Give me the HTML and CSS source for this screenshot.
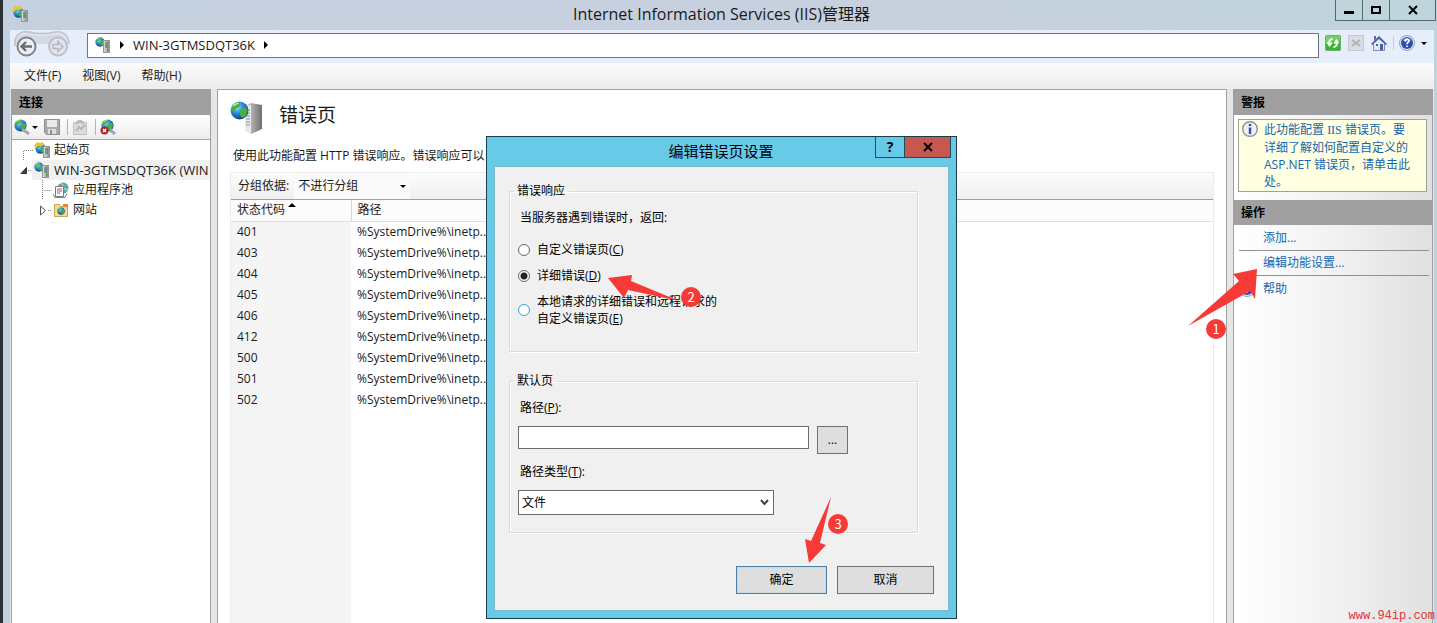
FILE: index.html
```html
<!DOCTYPE html>
<html lang="zh-CN">
<head>
    <meta charset="UTF-8">
    <meta name="viewport" content="width=device-width, initial-scale=1.0">
    <title>Internet Information Services (IIS)管理器</title>
    <link rel="stylesheet" href="styles.css">
</head>
<body>
    <!-- shared icons -->
    <svg class="icon-defs" width="0" height="0">
        <defs>
            <radialGradient id="sea" cx="35%" cy="30%" r="75%">
                <stop offset="0" stop-color="#9fe0ff" />
                <stop offset="0.5" stop-color="#2a86d6" />
                <stop offset="1" stop-color="#0b3c8c" />
            </radialGradient>
            <linearGradient id="metal">
                <stop offset="0" stop-color="#e2e6e2" />
                <stop offset="1" stop-color="#7f8a88" />
            </linearGradient>
            <linearGradient id="tower">
                <stop offset="0" stop-color="#d8d8d8" />
                <stop offset="1" stop-color="#6f6f6f" />
            </linearGradient>
            <symbol id="globe" viewBox="0 0 16 16">
                <circle cx="8" cy="8" r="7.5" fill="url(#sea)" />
                <path d="M3 3c2-2 5-2 6-1l-1 3-3 1-1 3-3-2zM9 7l4-2 2 3-2 5-3 1-2-3z" fill="#49b13c" />
                <path d="M3 4c1-1 2-2 4-2" stroke="#d8ffd0" fill="none" />
            </symbol>
            <symbol id="server" viewBox="0 0 16 16">
                <use href="#globe" width="10" height="10" />
                <rect x="8.5" y="3.500" width="6" height="12" fill="url(#metal)" stroke="#8f9a96" />
                <path d="M10 6h3M10 8h3M10 10h3" stroke="#53605c" />
                <rect x="12" y="12" width="1" height="2" fill="#2fa33a" />
            </symbol>
            <symbol id="start" viewBox="0 0 16 16">
                <use href="#globe" x="1" y="1" width="11" height="11" />
                <path d="M0 4l3-4 3 1 3-1 1 3-3 1-3 0-2 2z" fill="#f2c22e" />
                <rect x="9.500" y="4.500" width="6" height="11" fill="url(#metal)" stroke="#8f9a96" />
                <path d="M11 7h3M11 9h3M11 11h3" stroke="#53605c" />
            </symbol>
            <symbol id="help" viewBox="0 0 16 16">
                <circle cx="8" cy="8" r="7.500" fill="#e8ebf2" stroke="#9aa0b0" />
                <circle cx="8" cy="8" r="6" fill="#2a4fae" />
                <path d="M4 5a5 5 0 0 1 8 0c-2 2-6 2-8 0z" fill="#7d9ae0" />
                <path d="M6 6.500c0-3 4-3 4-.5 0 1.500-2 1.500-2 3.200M8 10.500v1.500" stroke="#fff" stroke-width="1.600" fill="none" />
            </symbol>
        </defs>
    </svg>

    <div class="window">
        <header class="titlebar">
            <svg class="icon app-icon"><use href="#start" /></svg>
            <h1>Internet Information Services (IIS)管理器</h1>
            <div class="window-buttons">
                <button aria-label="最小化"><svg width="10" height="10"><path d="M0 7.500h10" stroke="#000" stroke-width="3" /></svg></button>
                <button aria-label="最大化"><svg width="10" height="10"><path d="M1 2h8v6H1z" fill="none" stroke="#000" stroke-width="2" /></svg></button>
                <button class="close" aria-label="关闭"><svg width="10" height="10"><path d="M1 1l8 8M9 1L1 9" stroke="#000" stroke-width="2" /></svg></button>
            </div>
        </header>

        <div class="navbar">
            <svg class="nav-arrows" width="56" height="28" viewBox="0 0 56 28">
                <path d="M1 16C0 4 8 1 14 2c8 2 20 2 28 0 7-1 12 3 13 12" fill="none" stroke="#c4c7d1" stroke-width="2" />
                <path d="M2 14C3 5 9 3 14 4c8 2 20 2 28 0 6 0 10 3 11 10H30z" fill="#d5d9e6" />
                <circle cx="12.500" cy="16.500" r="9" fill="#eceef4" stroke="#808288" stroke-width="2" />
                <path d="M18 16.500H8M12 12l-4.500 4.500L12 21" fill="none" stroke="#6b6d72" stroke-width="2.400" />
                <circle cx="44" cy="16.500" r="9" fill="#e2e5ee" stroke="#bcbfc8" stroke-width="2" />
                <path d="M39 14.500h5v-3l5 5-5 5v-3h-5z" fill="none" stroke="#b4b7c0" stroke-width="1.500" />
            </svg>
            <div class="address">
                <svg class="icon"><use href="#server" /></svg>
                <span class="crumb-arrow"></span>
                <span>WIN-3GTMSDQT36K</span>
                <span class="crumb-arrow"></span>
            </div>
            <div class="nav-tools">
                <svg class="icon" viewBox="0 0 16 16">
                    <rect x="0.500" y="0.500" width="15" height="15" rx="1" fill="#35b62f" stroke="#6fae6a" />
                    <path d="M1 1h14v5q-7-2-14 3z" fill="#8be07a" opacity="0.700" />
                    <path d="M7.500 3.500L4.500 5.500v3M2.500 7.500l2 3 2.500-3M8.500 12.500l3-2v-3M9 8.500l2.500-3 2 3" fill="none" stroke="#fff" stroke-width="1.800" />
                </svg>
                <svg class="icon" viewBox="0 0 16 16">
                    <rect x="0.500" y="0.500" width="15" height="15" fill="#dcdde2" stroke="#c6c8ce" />
                    <path d="M4 5l8 6M12 5l-8 6" stroke="#aeb0b5" stroke-width="2" />
                </svg>
                <svg class="icon" viewBox="0 0 16 16">
                    <path d="M2.500 8v7.500h11V8L8 3z" fill="#e3e8f6" stroke="#7d8cb8" />
                    <path d="M0 9l8-8 8 8-1 1-7-6-7 6z" fill="#4a5fa5" />
                    <path d="M3 1h2v3L3 6z" fill="#6e5aa8" />
                    <rect x="9" y="9" width="3" height="6" fill="#4a5f9c" />
                    <rect x="5" y="9" width="2" height="2" fill="#4b6a74" />
                </svg>
                <span class="separator"></span>
                <svg class="icon"><use href="#help" /></svg>
                <span class="drop-arrow"></span>
            </div>
        </div>

        <nav class="menubar">
            <a href="#">文件(F)</a>
            <a href="#">视图(V)</a>
            <a href="#">帮助(H)</a>
        </nav>

        <div class="panes">
            <aside class="pane connections">
                <h2>连接</h2>
                <div class="tree-toolbar">
                    <svg class="icon" viewBox="0 0 16 16">
                        <use href="#globe" width="13" height="13" />
                        <path d="M8 11l3 1 4 3" stroke="#9aa9b4" stroke-width="3" fill="none" />
                    </svg>
                    <span class="drop-arrow"></span>
                    <svg class="icon" viewBox="0 0 16 16">
                        <path d="M0.500 0.500h15v15h-13l-2-2z" fill="#a9a9a9" stroke="#8f8f8f" />
                        <rect x="3" y="1" width="10" height="7" fill="#e9e9e9" />
                        <rect x="4" y="10" width="8" height="5" fill="#dedede" />
                        <rect x="6" y="11" width="2" height="4" fill="#8f8f8f" />
                    </svg>
                    <span class="separator"></span>
                    <svg class="icon" viewBox="0 0 16 16">
                        <path d="M1.500 3.500h13v12h-13z" fill="#dcdcdc" stroke="#c2c2c2" />
                        <path d="M5 5c0-4 6-4 6 0M4 12l3-4 2 2 4-4" stroke="#b5b5b5" stroke-width="2" fill="none" />
                    </svg>
                    <span class="separator"></span>
                    <svg class="icon" viewBox="0 0 16 16">
                        <use href="#globe" x="1" width="13" height="13" />
                        <path d="M10 11l5 4" stroke="#9aa9b4" stroke-width="3" />
                        <circle cx="4.500" cy="11.500" r="4" fill="#b3202c" />
                        <path d="M3 10l3 3M6 10l-3 3" stroke="#fff" stroke-width="1.500" />
                    </svg>
                </div>
                <ul class="tree">
                    <li>
                        <svg class="branch" width="10" height="20"><path d="M0.500 20V10.500H10" /></svg>
                        <svg class="icon"><use href="#start" /></svg>
                        <span>起始页</span>
                    </li>
                    <li>
                        <svg class="branch open" width="12" height="20"><path class="marker" d="M1 13.500l5.500-6v6z" /><path d="M8 10.500h4" /></svg>
                        <span class="node">
                            <svg class="icon"><use href="#server" /></svg>
                            <span>WIN-3GTMSDQT36K (WIN</span>
                        </span>
                    </li>
                    <li class="child">
                        <svg class="branch" width="10" height="20"><path d="M0.500 0v20M0.500 10.500H10" /></svg>
                        <svg class="icon" viewBox="0 0 16 16">
                            <circle cx="10" cy="6" r="5.500" fill="#5fa8a8" />
                            <path d="M7 1q4 1 3 5l5 2" stroke="#c9e6e0" fill="none" />
                            <path d="M2.500 4.500h8v10h-8z" fill="#fff" stroke="#7a7a86" />
                            <path d="M4 7h5M4 9h5M4 11h3" stroke="#b0525c" />
                            <path d="M0 12l2 3.500h10l2-4" fill="none" stroke="#7f8694" />
                        </svg>
                        <span>应用程序池</span>
                    </li>
                    <li class="child">
                        <svg class="branch closed" width="12" height="20"><path class="arrow-head" d="M0.500 6v9l5-4.500z" /><path d="M8 10.500h4" /></svg>
                        <svg class="icon" viewBox="0 0 16 16">
                            <path d="M1.500 2.500h5l1 2h7v10h-13z" fill="#f4dd93" stroke="#c9a64e" />
                            <path d="M10 2h5v3h-5z" fill="#e9853a" />
                            <use href="#globe" x="4" y="5" width="8" height="8" />
                        </svg>
                        <span>网站</span>
                    </li>
                </ul>
            </aside>

            <main class="feature">
                <div class="feature-title">
                    <svg width="32" height="33" viewBox="0 0 32 33">
                        <path d="M15 5l6-3 11 2v24l-11 5-6-4z" fill="url(#tower)" />
                        <path d="M15 5l6-1v29l-6-4z" fill="#e8eaea" />
                        <path d="M16 9h4M16 12h4M16 15h4M16 18h4M16 21h4M16 24h4" stroke="#8a9090" />
                        <use href="#globe" y="0" width="19" height="19" />
                    </svg>
                    <h2>错误页</h2>
                </div>
                <p class="description">使用此功能配置 HTTP 错误响应。错误响应可以</p>
                <div class="list">
                    <div class="group-bar">
                        <label for="group">分组依据:</label>
                        <div class="group-select">
                            <select id="group"><option>不进行分组</option></select>
                            <span class="drop-arrow"></span>
                        </div>
                    </div>
                    <table>
                        <thead>
                            <tr><th class="code">状态代码<span class="sort-arrow"></span></th><th>路径</th></tr>
                        </thead>
                        <tbody>
                            <tr><td class="code">401</td><td>%SystemDrive%\inetp...</td></tr>
                            <tr><td class="code">403</td><td>%SystemDrive%\inetp...</td></tr>
                            <tr><td class="code">404</td><td>%SystemDrive%\inetp...</td></tr>
                            <tr><td class="code">405</td><td>%SystemDrive%\inetp...</td></tr>
                            <tr><td class="code">406</td><td>%SystemDrive%\inetp...</td></tr>
                            <tr><td class="code">412</td><td>%SystemDrive%\inetp...</td></tr>
                            <tr><td class="code">500</td><td>%SystemDrive%\inetp...</td></tr>
                            <tr><td class="code">501</td><td>%SystemDrive%\inetp...</td></tr>
                            <tr><td class="code">502</td><td>%SystemDrive%\inetp...</td></tr>
                        </tbody>
                    </table>
                    <div class="list-rest"></div>
                </div>
            </main>

            <aside class="pane actions">
                <h2>警报</h2>
                <div class="alert">
                    <svg class="icon" viewBox="0 0 16 16">
                        <circle cx="8" cy="8" r="7.300" fill="#eef0f4" stroke="#8d919c" stroke-width="1.400" />
                        <path d="M8 3v2M8 6.500V13" stroke="#2b4fa8" stroke-width="2.400" />
                    </svg>
                    <a href="#">此功能配置 <span class="serif">IIS</span> 错误页。要详细了解如何配置自定义的 ASP.NET 错误页，请单击此处。</a>
                </div>
                <h2>操作</h2>
                <ul class="action-list">
                    <li><a href="#">添加...</a></li>
                    <li><a href="#">编辑功能设置...</a></li>
                    <li><svg class="icon"><use href="#help" /></svg><a href="#">帮助</a></li>
                </ul>
            </aside>
        </div>
    </div>

    <section class="dialog" role="dialog" aria-labelledby="dialog-title">
        <header class="dialog-title">
            <h2 id="dialog-title">编辑错误页设置</h2>
            <div class="dialog-buttons">
                <button>?</button>
                <button class="close" aria-label="关闭"><svg width="10" height="10"><path d="M1 1l8 8M9 1L1 9" stroke="#000" stroke-width="2" /></svg></button>
            </div>
        </header>
        <form class="dialog-body">
            <fieldset class="response">
                <legend>错误响应</legend>
                <p>当服务器遇到错误时，返回:</p>
                <div class="radios">
                    <label><input type="radio" name="mode"><span>自定义错误页(<u>C</u>)</span></label>
                    <label><input type="radio" name="mode" checked><span>详细错误(<u>D</u>)</span></label>
                    <label><input type="radio" name="mode" class="hot"><span>本地请求的详细错误和远程请求的<br>自定义错误页(<u>E</u>)</span></label>
                </div>
            </fieldset>
            <fieldset class="default-page">
                <legend>默认页</legend>
                <label for="path">路径(<u>P</u>):</label>
                <div class="path-row">
                    <input type="text" id="path">
                    <button type="button">...</button>
                </div>
                <label for="path-type">路径类型(<u>T</u>):</label>
                <div class="type-select">
                    <select id="path-type"><option>文件</option></select>
                    <svg width="9" height="7"><path d="M1 1l3.500 4L8 1" fill="none" stroke="#444" stroke-width="2" /></svg>
                </div>
            </fieldset>
            <div class="form-buttons">
                <button type="button" class="ok">确定</button>
                <button type="button" class="cancel">取消</button>
            </div>
        </form>
    </section>

    <!-- step markers -->
    <svg class="arrow arrow-1" width="70" height="58"><path d="M69 0L45 5l6 7L0 57l62-35 5 8z" /></svg>
    <span class="step step-1">1</span>
    <svg class="arrow arrow-2" width="72" height="27"><path d="M0 4L24 1l-1 6 48 20-51-11-4 8z" /></svg>
    <span class="step step-2">2</span>
    <svg class="arrow arrow-3" width="27" height="66"><path d="M26 0L6 44l-6-2 4 24 17-18-6-2z" /></svg>
    <span class="step step-3">3</span>
    <span class="watermark">www.94ip.com</span>
</body>
</html>
```

FILE: styles.css
```css
* {
    box-sizing: border-box;
}

body {
    margin: 0;
    height: 100vh;
    position: relative;
    overflow: hidden;
    font-family: "Open Sans", "Noto Sans CJK SC", sans-serif;
    font-size: 12px;
    line-height: 18px;
    color: #1a1a1a;
    background: #c8d3de;
}

h1, h2, p, ul {
    margin: 0;
    padding: 0;
    font-weight: normal;
}

ul {
    list-style: none;
}

a {
    color: #1a1a1a;
    text-decoration: none;
}

button, input, select {
    font: inherit;
    color: inherit;
    margin: 0;
    border-radius: 0;
}

button {
    display: flex;
    align-items: center;
    justify-content: center;
    padding: 0;
}

.icon-defs {
    position: absolute;
}

.icon {
    width: 16px;
    height: 16px;
    flex: none;
}

.drop-arrow {
    border: 3px solid transparent;
    border-top-color: #000;
    border-bottom: 0;
    flex: none;
}

/* window frame */
.window {
    display: flex;
    flex-direction: column;
    height: 100%;
    border-left: 3px solid #2c3138;
    padding: 0 3px 0 7px;
    background: linear-gradient(90deg, #c5d0de, #c8d0de 60%, #bfd4da);
}

.titlebar {
    display: flex;
    align-items: flex-start;
    height: 30px;
    flex: none;
    margin-right: -2px;
}

.titlebar h1 {
    flex: 1;
    font-size: 16px;
    line-height: 29px;
    text-align: center;
    padding-left: 80px;
}

.app-icon {
    margin: 6px 0 0 2px;
}

.window-buttons {
    display: flex;
    border: 1px solid #4f6a70;
    border-top: 0;
}

.window-buttons button {
    width: 27px;
    height: 20px;
    border: 0;
    border-right: 1px solid #4f6a70;
    background: transparent;
}

.window-buttons .close {
    width: 45px;
    border-right: 0;
}

.navbar {
    display: flex;
    align-items: flex-start;
    height: 33px;
    flex: none;
    padding: 0 7px 0 4px;
    background: #e6eefb;
}

.nav-arrows {
    margin-right: 17px;
}

.address {
    flex: 1;
    display: flex;
    align-items: center;
    gap: 9px;
    height: 25px;
    margin-top: 3px;
    padding: 0 7px 2px;
    border: 1px solid #6f7780;
    background: #fff;
    font-size: 13px;
}

.crumb-arrow {
    border: 4px solid transparent;
    border-left-color: #000;
    border-right: 0;
}

.nav-tools {
    display: flex;
    align-items: center;
    gap: 7px;
    margin: 5px 0 0 6px;
}

.separator {
    width: 1px;
    height: 16px;
    background: #b4b4b4;
    flex: none;
}

.nav-tools .separator {
    height: 14px;
    margin: 0 -2px 0 -1px;
    background: #c4cbd8;
}

.nav-tools .drop-arrow {
    margin-left: -1px;
}

.menubar {
    display: flex;
    gap: 21px;
    height: 26px;
    flex: none;
    padding: 4px 14px;
    background: linear-gradient(#fbfbfb, #ececec);
}

/* panes */
.panes {
    flex: 1;
    display: flex;
    gap: 6px;
    min-height: 0;
    padding: 0 1px;
    background: #e6e6e6;
}

.pane {
    width: 200px;
    flex: none;
    border: 1px solid #9f9f9f;
    border-bottom: 0;
}

.pane h2 {
    height: 25px;
    padding-left: 7px;
    font-size: 12px;
    font-weight: bold;
    line-height: 25px;
    color: #000;
    background: #a0a0a0;
}

.connections {
    background: #fff;
    overflow: hidden;
}

.tree-toolbar {
    display: flex;
    align-items: center;
    height: 25px;
    padding-left: 2px;
    border-bottom: 1px solid #a6a6a6;
    background: linear-gradient(#fff, #ececec);
}

.tree-toolbar .drop-arrow {
    margin: 0 6px 0 2px;
}

.tree-toolbar .separator {
    margin: 0 4px 0 7px;
}

.tree li {
    display: flex;
    align-items: center;
    height: 20px;
    white-space: nowrap;
}

.tree .icon {
    margin: 0 4px 0 1px;
}

.branch {
    flex: none;
    margin-left: 11px;
    fill: none;
    stroke: #888;
    stroke-dasharray: 1 1;
}

.branch .marker {
    fill: #444;
    stroke: #333;
    stroke-dasharray: none;
}

.branch .arrow-head {
    fill: #fff;
    stroke: #555;
    stroke-dasharray: none;
}

.branch.open {
    margin-left: 8px;
}

.node {
    flex: 1;
    display: flex;
    align-items: center;
    height: 20px;
    padding-left: 1px;
    background: #f1f1f1;
    font-size: 13px;
}

.tree .child .branch {
    margin-left: 30px;
}

.tree .child .closed {
    margin-left: 28px;
}

/* feature view */
.feature {
    flex: 1;
    min-width: 0;
    display: flex;
    flex-direction: column;
    padding: 11px 12px 0;
    border: 1px solid #a0a0a0;
    border-bottom: 0;
    background: #fff;
}

.feature-title {
    display: flex;
    align-items: flex-start;
    gap: 17px;
}

.feature-title h2 {
    font-size: 19px;
    line-height: 28px;
}

.description {
    margin: 13px 0 7px 3px;
}

.list {
    flex: 1;
    display: flex;
    flex-direction: column;
    border: 1px solid #ececec;
    border-bottom: 0;
}

.group-bar {
    display: flex;
    align-items: center;
    height: 27px;
    padding-left: 7px;
    border-bottom: 1px solid #a0a0a0;
    background: linear-gradient(#fcfcfc, #efefef);
}

.group-select {
    display: flex;
    align-items: center;
    width: 116px;
    height: 26px;
    margin-left: 5px;
    background: #fafafa;
}

.group-select select {
    flex: 1;
    appearance: none;
    border: 0;
    padding: 0 4px;
    background: transparent;
}

.group-select .drop-arrow {
    margin-right: 4px;
}

table {
    width: 100%;
    border-collapse: collapse;
    table-layout: fixed;
}

th, td {
    height: 21px;
    padding: 0 6px;
    font-weight: normal;
    line-height: 20px;
    text-align: left;
}

th {
    border-bottom: 1px solid #e0e0e0;
    background: #fcfcfc;
}

.code {
    width: 120px;
}

th.code {
    border-right: 1px solid #d5d5d5;
}

td.code {
    background: #f5f5f5;
}

.sort-arrow {
    display: inline-block;
    margin: 0 0 7px 3px;
    border: 4px solid transparent;
    border-bottom-color: #000;
    border-top: 0;
}

.list-rest {
    flex: 1;
    width: 120px;
    background: #f5f5f5;
}

/* alerts and actions */
.actions {
    background: linear-gradient(90deg, #fff, #f2f2f2 50%, #e0e0e0);
}

.alert {
    display: flex;
    gap: 6px;
    margin: 4px 5px 8px 4px;
    padding: 1px 12px 1px 3px;
    border: 1px solid #a0a09a;
    background: #ffffe1;
    line-height: 17px;
}

.actions a {
    color: #1566b0;
}

.serif {
    font-family: "Liberation Serif", serif;
}

.action-list {
    padding: 1px 3px 0 5px;
}

.action-list li {
    display: flex;
    align-items: center;
    height: 25px;
    padding-left: 24px;
    border-bottom: 1px solid #909090;
}

.action-list li:last-child {
    gap: 8px;
    padding-left: 0;
    border-bottom: 0;
}

/* dialog */
.dialog {
    position: absolute;
    left: 486px;
    top: 136px;
    width: 471px;
    padding: 0 7px 7px;
    border: 1px solid #1d3c4c;
    background: #67cbe8;
    color: #000;
}

.dialog-title {
    display: flex;
    align-items: flex-start;
    height: 29px;
    margin-right: -2px;
}

.dialog-title h2 {
    flex: 1;
    padding-left: 73px;
    font-size: 15px;
    line-height: 28px;
    text-align: center;
}

.dialog-buttons {
    display: flex;
    border: 1px solid #1d4c5c;
    border-top: 0;
}

.dialog-buttons button {
    width: 28px;
    height: 20px;
    border: 0;
    background: transparent;
    font-size: 14px;
    font-weight: bold;
}

.dialog-buttons .close {
    width: 46px;
    border-left: 1px solid #1d4c5c;
    background: #c75850;
}

.dialog-body {
    padding: 15px 14px 16px;
    border: 1px solid #7bb9cb;
    background: #f0f0f0;
}

fieldset {
    min-width: 0;
    margin: 0 16px 20px 0;
    padding: 9px 8px 24px;
    border: 1px solid #dcdcdc;
    box-shadow: 1px 1px 0 #fff, inset 1px 1px 0 #fff;
}

legend {
    margin-left: -4px;
    padding: 0 4px 0 3px;
}

fieldset p, fieldset > label {
    display: block;
    padding-left: 2px;
}

.radios {
    display: flex;
    flex-direction: column;
    gap: 9px;
    margin-top: 14px;
    line-height: 17px;
}

.radios label {
    display: flex;
    align-items: center;
    gap: 7px;
}

input[type="radio"] {
    appearance: none;
    width: 12px;
    height: 12px;
    border: 1px solid #666;
    border-radius: 50%;
    background: #fff;
}

input[type="radio"]:checked {
    background: radial-gradient(circle, #222 3px, #fff 4px);
}

input[type="radio"].hot {
    border-color: #3a9bdc;
}

.default-page {
    display: flex;
    flex-direction: column;
    gap: 9px;
    margin-bottom: 33px;
    padding-bottom: 17px;
}

.path-row {
    display: flex;
    align-items: flex-start;
    gap: 8px;
}

.path-row input {
    width: 291px;
    height: 23px;
    padding: 0 4px;
    border: 1px solid #6d6d6d;
    background: #fff;
}

.path-row button {
    width: 31px;
    height: 28px;
}

.dialog-body button {
    border: 1px solid #707070;
    background: #dedede;
}

.type-select {
    display: flex;
    align-items: center;
    width: 256px;
    height: 25px;
    padding-right: 4px;
    border: 1px solid #6d6d6d;
    background: #fff;
}

.type-select select {
    flex: 1;
    appearance: none;
    border: 0;
    padding: 0 3px;
    background: transparent;
}

.form-buttons {
    display: flex;
    justify-content: flex-end;
    gap: 10px;
}

.form-buttons button {
    width: 97px;
    height: 28px;
}

.form-buttons .ok {
    width: 91px;
    border-color: #4a7ea6;
    box-shadow: inset 0 0 2px #a8d4ee;
}

/* numbered markers over the window */
.arrow, .step, .watermark {
    position: absolute;
}

.arrow {
    fill: #f63a38;
}

.arrow-1 {
    left: 1188px;
    top: 269px;
}

.arrow-2 {
    left: 608px;
    top: 274px;
}

.arrow-3 {
    left: 805px;
    top: 497px;
}

.step {
    width: 20px;
    height: 20px;
    border-radius: 50%;
    background: #f63a38;
    color: #fff;
    font-family: "Noto Sans CJK SC", sans-serif;
    font-size: 13px;
    line-height: 20px;
    text-align: center;
}

.step-1 {
    left: 1206px;
    top: 319px;
}

.step-2 {
    left: 681px;
    top: 287px;
}

.step-3 {
    left: 828px;
    top: 514px;
}

.watermark {
    right: 2px;
    bottom: -2px;
    font-family: "Liberation Mono", monospace;
    color: #e0333c;
}
```
